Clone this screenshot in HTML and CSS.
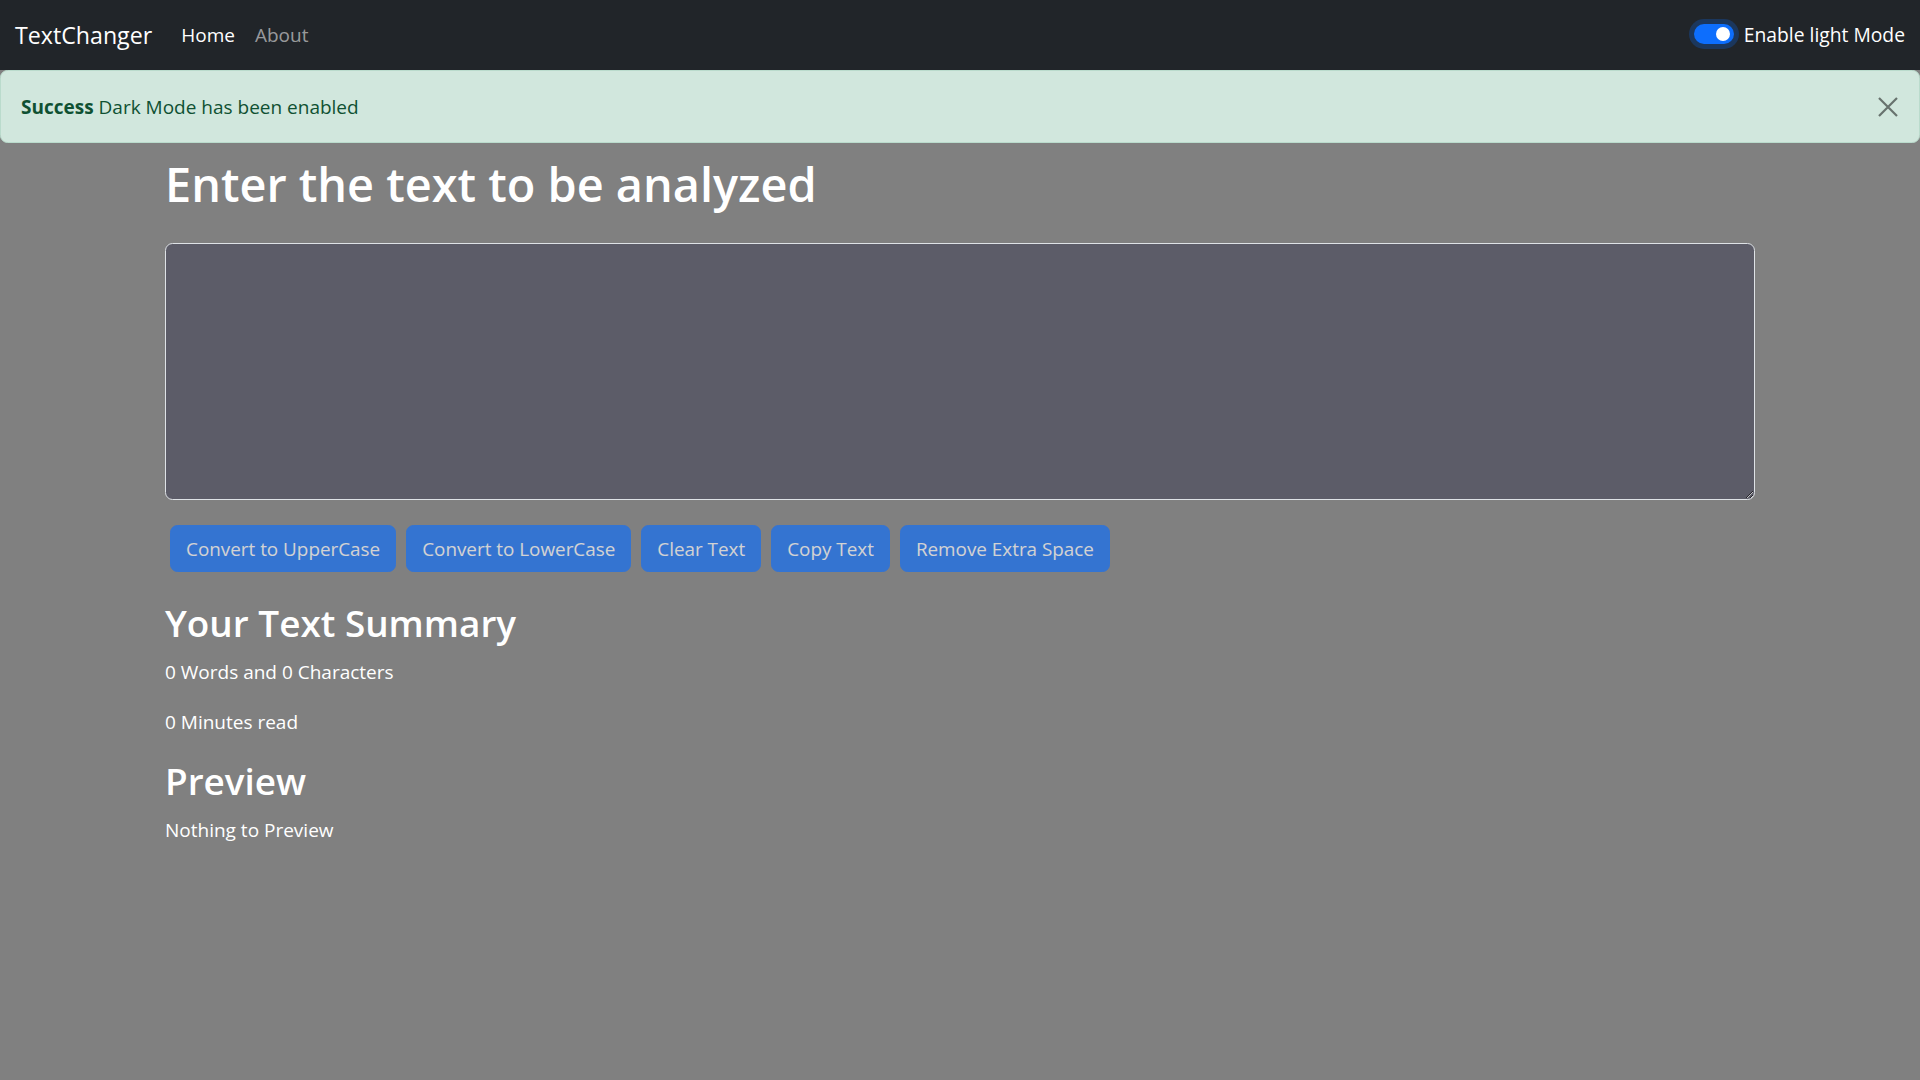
FILE: index.html
```html
<!DOCTYPE html>
<html lang="en">
<head>
<meta charset="utf-8">
<title>TextChanger</title>
<link rel="stylesheet" href="styles.css">
</head>
<body>
<nav class="navbar">
  <div class="nav-left">
    <a class="brand" href="#">TextChanger</a>
    <ul class="nav-links">
      <li><a class="nav-link active" href="#">Home</a></li>
      <li><a class="nav-link" href="#">About</a></li>
    </ul>
  </div>
  <div class="mode-toggle">
    <span class="switch"><span class="knob"></span></span>
    <label class="switch-label">Enable light Mode</label>
  </div>
</nav>

<div class="alert">
  <div class="alert-text"><strong>Success</strong> Dark Mode has been enabled</div>
  <button class="btn-close" aria-label="Close">
    <svg viewBox="0 0 22 22" width="22" height="22"><path d="M2 2 L20 20 M20 2 L2 20" stroke="#000" stroke-width="2.2" fill="none"/></svg>
  </button>
</div>

<main class="container">
  <h1 class="title">Enter the text to be analyzed</h1>
  <div class="field">
    <textarea class="text-box" rows="8"></textarea>
  </div>
  <div class="actions">
    <button class="btn" disabled>Convert to UpperCase</button>
    <button class="btn" disabled>Convert to LowerCase</button>
    <button class="btn" disabled>Clear Text</button>
    <button class="btn" disabled>Copy Text</button>
    <button class="btn" disabled>Remove Extra Space</button>
  </div>
  <section class="summary">
    <h2 class="sub">Your Text Summary</h2>
    <p>0 Words and 0 Characters</p>
    <p>0 Minutes read</p>
    <h2 class="sub">Preview</h2>
    <p>Nothing to Preview</p>
  </section>
</main>
</body>
</html>
```
FILE: styles.css
```css
* { box-sizing: border-box; }
html, body { margin: 0; padding: 0; }
body {
  background: #808080;
  color: #fff;
  font-family: "Open Sans", "Noto Sans", sans-serif;
  font-size: 19px;
  line-height: 30px;
  min-height: 1080px;
}

/* Navbar */
.navbar {
  height: 70px;
  background: #212529;
  display: flex;
  align-items: center;
  justify-content: space-between;
  padding: 0 15px 0 15px;
}
.nav-left { display: flex; align-items: center; }
.brand {
  color: #fff;
  text-decoration: none;
  font-size: 23.2px;
  line-height: 36px;
  margin-right: 19px;
}
.nav-links { list-style: none; margin: 0; padding: 0; display: flex; }
.nav-link {
  display: block;
  padding: 10px 10px;
  color: rgba(255,255,255,.55);
  text-decoration: none;
  font-size: 19px;
}
.nav-link.active { color: #fff; }

.mode-toggle { display: flex; align-items: center; }
.switch {
  position: relative;
  width: 40px;
  height: 20px;
  border-radius: 10px;
  background: #0d6efd;
  box-shadow: 0 0 0 5px rgba(13,110,253,.25);
  margin-right: 10px;
  margin-top: -2px;
}
.knob {
  position: absolute;
  right: 4px;
  top: 3px;
  width: 14px;
  height: 14px;
  border-radius: 50%;
  background: #fff;
}
.switch-label { color: #fff; font-size: 19.3px; }

/* Alert */
.alert {
  height: 73px;
  background: #d1e7dd;
  border: 1px solid #badbcc;
  border-radius: 7.5px;
  color: #0f5132;
  display: flex;
  align-items: center;
  justify-content: space-between;
  padding: 0 20px 0 20px;
}
.alert-text strong { font-weight: 700; }
.btn-close {
  background: none;
  border: 0;
  padding: 0;
  width: 22px;
  height: 22px;
  opacity: .5;
  display: flex;
}

/* Main */
.container {
  width: 1590px;
  margin: 11px auto 0;
}
.title {
  font-size: 46.85px;
  font-weight: 600;
  line-height: 60px;
  margin: 0 0 29px;
}
.field { margin-bottom: 20px; }
.text-box {
  display: block;
  width: 100%;
  height: 257px;
  background: #5c5c68;
  border: 1px solid #dee2e6;
  border-radius: 7.5px;
  color: #fff;
  font: inherit;
  padding: 7px 15px;
  resize: vertical;
}
.actions { display: flex; flex-wrap: wrap; }
.btn {
  margin: 5px;
  height: 47px;
  padding: 0 15px;
  background: #0d6efd;
  border: 1px solid #0d6efd;
  border-radius: 7.5px;
  color: #fff;
  font: inherit;
  font-size: 18.87px;
  opacity: .65;
}
.summary { margin-top: 22px; }
.sub {
  font-size: 36.9px;
  font-weight: 600;
  line-height: 48px;
  margin: 0 0 10px;
}
.summary p { margin: 0 0 20px; }
```
